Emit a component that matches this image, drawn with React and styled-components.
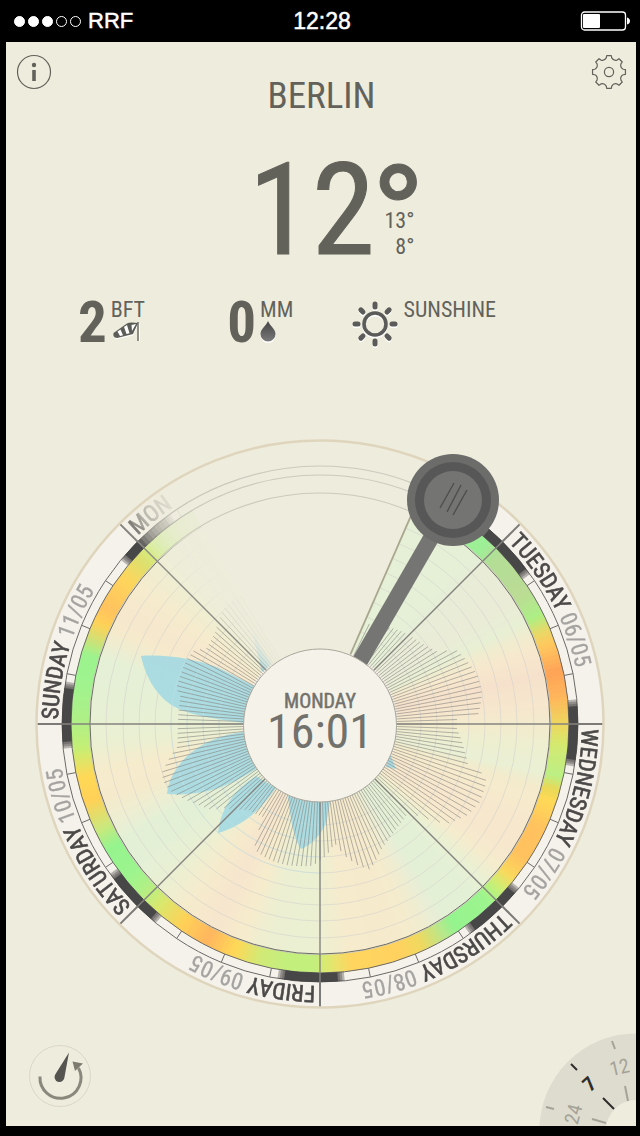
import React from 'react';
import styled, { createGlobalStyle } from 'styled-components';

const GlobalStyle = createGlobalStyle`
  * {
    box-sizing: border-box;
  }

  body {
    margin: 0;
    background: #000000;
    color: #62625b;
    font-family: 'Roboto Condensed', 'Liberation Sans Narrow', Roboto, sans-serif;
  }
`;

const Screen = styled.div`
  min-height: 100vh;
  display: flex;
  flex-direction: column;
  padding: 0 4px 10px 6px;
`;

const StatusBar = styled.header`
  height: 42px;
  display: grid;
  grid-template-columns: 1fr auto 1fr;
  align-items: center;
  padding: 0 6px 0 8px;
  color: #ffffff;
  font-family: 'Liberation Sans', sans-serif;
  font-size: 22px;
  line-height: 26px;
  -webkit-text-stroke: 0.5px #ffffff;
`;

const Carrier = styled.div`
  display: flex;
  align-items: center;
  gap: 3px;
`;

const SignalDot = styled.span`
  width: 11px;
  height: 11px;
  border: 1px solid #ffffff;
  border-radius: 50%;
  background: ${({ $on }) => ($on ? '#ffffff' : 'transparent')};
`;

const CarrierName = styled.span`
  margin-left: 4px;
`;

const Clock = styled.time`
  font-size: 23px;
`;

const BatterySlot = styled.div`
  display: flex;
  justify-content: flex-end;
`;

const Panel = styled.main`
  flex: 1;
  display: flex;
  flex-direction: column;
  background: #eeecdc;
  overflow: hidden;
`;

const TopBar = styled.div`
  display: flex;
  justify-content: space-between;
  align-items: flex-start;
  padding: 12px 9px 0 10px;
`;

const IconButton = styled.button`
  display: block;
  padding: 0;
  border: none;
  background: none;
  color: inherit;
  line-height: 0;
  cursor: pointer;
`;

const City = styled.h1`
  margin: 20px 0 0;
  font-size: 37px;
  font-weight: normal;
  line-height: 44px;
`;

const Temperature = styled.div`
  display: flex;
  justify-content: center;
  padding: 28px 0 0 28px;
`;

const Current = styled.div`
  font-size: 128px;
  line-height: 128px;
  -webkit-text-stroke: 1px #62625b;
`;

const Range = styled.div`
  display: flex;
  flex-direction: column;
  align-items: flex-end;
  font-size: 22px;
  line-height: 26px;
`;

const Extreme = styled.span`
  padding-right: 7px;
`;

const Degree = styled.span`
  height: 62px;
  font-family: 'Liberation Sans', sans-serif;
  font-size: 116px;
  font-weight: bold;
  line-height: 118px;
  -webkit-text-stroke: 1px #62625b;
`;

const Conditions = styled.div`
  display: grid;
  grid-template-columns: 149fr 124fr 284fr;
  align-items: start;
  padding: 20px 0 0 72px;
`;

const Condition = styled.div`
  display: flex;
  align-items: flex-start;
  gap: 4px;
`;

const Amount = styled.span`
  font-size: 57px;
  font-weight: bold;
  line-height: 57px;
`;

const Unit = styled.span`
  display: flex;
  flex-direction: column;
  padding-top: 5px;
  font-size: 22px;
  line-height: 22px;
`;

const Sky = styled.span`
  padding: 6px 1px 0;
  line-height: 0;
`;

const DialDrawing = styled.svg`
  display: block;
  width: 100%;
  height: auto;
  margin-top: auto;
  font-family: inherit;
`;

const Footer = styled.footer`
  display: flex;
  justify-content: space-between;
  align-items: flex-end;
  height: 106px;
  padding-left: 23px;
`;

const ResetButton = styled(IconButton)`
  margin-bottom: 19px;
`;

const CX = 320;
const CY = 724;

const point = (radius, angle) => {
  const a = (angle * Math.PI) / 180;
  return [CX + radius * Math.sin(a), CY - radius * Math.cos(a)];
};

const arc = (radius, from, to) => {
  const [x1, y1] = point(radius, from);
  const [x2, y2] = point(radius, to);
  const large = to - from > 180 ? 1 : 0;
  return `M${x1} ${y1}A${radius} ${radius} 0 ${large} 1 ${x2} ${y2}`;
};

const wedge = (radius, from, to) => {
  const [x, y] = point(radius, to);
  return `${arc(radius, from, to)}L${x} ${y}L${CX} ${CY}Z`;
};

// angle on the dial, colour of the temperature there
const TEMPERATURE = [
  [23, '#98f592'], [42, '#98f092'], [46, '#b0dd92'], [57, '#b8dc90'],
  [63, '#a8f080'], [67, '#e8d860'], [70, '#ffc858'], [77, '#ffa050'],
  [83, '#ffb455'], [90, '#ecd858'], [94, '#d4e868'], [102, '#b8f080'],
  [105, '#e8d850'], [108, '#ffd850'], [115, '#ffc058'], [123, '#ffc058'],
  [128, '#fad855'], [132, '#c8f070'], [136, '#98f58a'], [146, '#90f58a'],
  [149, '#b4e888'], [155, '#f0d858'], [160, '#ffd058'], [172, '#ffd458'],
  [177, '#e0e868'], [181, '#c0f078'], [188, '#c0f078'], [194, '#d0ea70'],
  [200, '#ffd850'], [207, '#ffb458'], [214, '#ffd050'], [221, '#d8e868'],
  [226, '#b0f080'], [231, '#98f58a'], [239, '#90f58a'], [244, '#c8e878'],
  [251, '#ffd050'], [257, '#ffd850'], [264, '#c0f070'], [270, '#acf082'],
  [281, '#98f58a'], [286, '#98f58a'], [290, '#d0e070'], [294, '#ffd050'],
  [298, '#ffc058'], [306, '#ffd455'], [312, '#dce068'], [316, '#d0ee80'],
  [320, '#c0f080'], [335, '#c0f080'],
];

// angle on the dial, how far out the wind line reaches
const WIND = [
  [24, 110], [42, 124], [52, 130], [58, 137], [62, 156], [67, 160], [73, 165],
  [79, 165], [84, 161], [87, 158], [88, 137], [92, 137], [98, 144], [105, 153],
  [107, 170], [109, 176], [116, 178], [122, 173], [125, 167], [128, 162],
  [130, 152], [132, 140], [135, 124], [137, 126], [143, 129], [147, 132],
  [153, 138], [160, 152], [161, 154], [165, 146], [169, 135], [173, 120],
  [177, 131], [183, 142], [193, 145], [200, 145], [206, 143], [209, 136],
  [211, 109], [220, 112], [229, 128], [232, 139], [237, 147], [240, 153],
  [246, 164], [250, 167], [253, 165], [257, 155], [261, 144], [269, 142],
  [281, 142], [284, 148], [296, 148], [300, 146], [304, 136], [311, 139],
  [320, 150], [330, 152],
];

const DAYS = [
  { name: 'TUESDAY', date: '06/05', angle: 45 },
  { name: 'WEDNESDAY', date: '07/05', angle: 90 },
  { name: 'THURSDAY', date: '08/05', angle: 135 },
  { name: 'FRIDAY', date: '09/05', angle: 180 },
  { name: 'SATURDAY', date: '10/05', angle: 225 },
  { name: 'SUNDAY', date: '11/05', angle: 270 },
  { name: 'MON', date: '', angle: 315 },
];

const RAIN = [
  'M141 656C165 654 200 659 223 670L256 687L244 723C225 720 195 717 177 708C160 700 146 680 141 656Z',
  'M167 794C170 764 200 737 243 732L256 769C235 782 210 797 167 794Z',
  'M218 833C221 806 235 790 256 776L276 788C262 808 245 825 218 833Z',
  'M288 796C290 815 293 838 301 849C312 845 324 832 327 819L331 796Z',
  'M390 754L396 769L386 767Z',
  'M252 630Q262 650 272 664L262 672Z',
];

const between = (stops, angle) => {
  const i = Math.max(1, stops.findIndex(([a]) => a >= angle));
  const [a1, v1] = stops[i - 1];
  const [a2, v2] = stops[i];
  return [v1, v2, (angle - a1) / (a2 - a1)];
};

const mixColor = (angle) => {
  const [c1, c2, t] = between(TEMPERATURE, angle);
  const channels = [1, 3, 5].map((at) => {
    const from = parseInt(c1.slice(at, at + 2), 16);
    const to = parseInt(c2.slice(at, at + 2), 16);
    return Math.round(from + (to - from) * t);
  });
  return `rgb(${channels.join(',')})`;
};

const reach = (angle) => {
  const [r1, r2, t] = between(WIND, angle);
  return r1 + (r2 - r1) * t;
};

const START = 23.6;
const degrees = Array.from({ length: 310 }, (_, i) => START + i);
const hours = Array.from({ length: 162 }, (_, i) => 26.25 + i * 1.875);
const fade = Array.from({ length: 13 }, (_, i) => 315 + i);
const rings = [101, 117, 133, 149, 165, 181, 197, 214];

const Spectrum = ({ radius, width, opacity }) => (
  <g fill="none" strokeWidth={width} opacity={opacity}>
    {degrees.map((a) => (
      <path key={a} d={arc(radius, a, a + 1.4)} stroke={mixColor(a)} />
    ))}
  </g>
);

const Night = ({ angle }) => (
  <g fill="none" stroke="#444242" strokeWidth="9">
    {[0, 0.5, 1, 1.5].map((inset) => (
      <path
        key={inset}
        d={arc(253.5, angle - 5.5 + inset, angle + 9.5 - inset)}
        opacity={inset === 1.5 ? 0.9 : 0.35}
      />
    ))}
  </g>
);

const DayLabel = ({ name, date, angle }) => (
  <>
    <path id={`day-${angle}`} d={arc(262, angle + 1, angle + 44)} fill="none" />
    <text fontSize="23" fill="#4b4948">
      <textPath href={`#day-${angle}`}>
        <tspan stroke="#4b4948" strokeWidth="0.6">{name}</tspan>
        <tspan fill="#a5a3a0" stroke="#a5a3a0" strokeWidth="0.3">{` ${date}`}</tspan>
      </textPath>
    </text>
  </>
);

const Spoke = ({ angle, from, to, ...rest }) => {
  const [x1, y1] = point(from, angle);
  const [x2, y2] = point(to, angle);
  return <line x1={x1} y1={y1} x2={x2} y2={y2} {...rest} />;
};

const Dial = () => (
  <DialDrawing viewBox="6 430 630 590" role="img" aria-label="Seven day weather dial">
    <defs>
      <mask id="fade" maskUnits="userSpaceOnUse" x="6" y="430" width="630" height="590">
        <rect x="6" y="430" width="630" height="590" fill="#ffffff" />
        {fade.map((a) => (
          <path key={a} d={wedge(300, a, 360 + START)} fill="#000000" opacity="0.18" />
        ))}
        <path d={wedge(300, 329, 360 + START)} fill="#000000" />
      </mask>
    </defs>

    <g fill="none" stroke="#cbcabc" strokeWidth="1.2">
      <circle cx={CX} cy={CY} r="258" />
      <circle cx={CX} cy={CY} r="249" />
      <circle cx={CX} cy={CY} r="231" />
    </g>

    <g mask="url(#fade)">
      <circle cx={CX} cy={CY} r="266" fill="none" stroke="#f5f2ec" strokeWidth="34" />
      <circle cx={CX} cy={CY} r="230" fill="#f5f0e6" />
      <Spectrum radius={154} width={152} opacity={0.17} />
      <Spectrum radius={240} width={18} opacity={0.95} />

      <g fill="none" stroke="#d3d2cc" strokeWidth="1" opacity="0.6">
        {rings.map((r) => <circle key={r} cx={CX} cy={CY} r={r} />)}
      </g>

      {RAIN.map((d) => <path key={d} d={d} fill="#a6dae2" opacity="0.95" />)}
      <g fill="none" stroke="#c3e3e6" strokeWidth="1" opacity="0.5">
        {rings.slice(0, 4).map((r) => <path key={r} d={arc(r, 180, 295)} />)}
      </g>

      {hours.map((a) => (
        <Spoke key={a} angle={a} from={76} to={reach(a)} stroke="#87847f" strokeWidth="1" opacity="0.6" />
      ))}

      <g fill="none" stroke="#6c6a67" strokeWidth="1">
        <circle cx={CX} cy={CY} r="258" />
        <circle cx={CX} cy={CY} r="249" />
        <circle cx={CX} cy={CY} r="230" />
      </g>

      {DAYS.map(({ angle }) => (
        <g key={angle} stroke="#6c6a67">
          <Night angle={angle} />
          {[11.25, 22.5, 33.75].map((step) => (
            <Spoke key={step} angle={angle + step} from={249} to={258} />
          ))}
          <Spoke angle={angle} from={76} to={258} stroke="#85837e" strokeWidth="1.4" />
          <Spoke angle={angle} from={258} to={283} stroke="#7c7a76" strokeWidth="2" />
        </g>
      ))}

      {DAYS.map((day) => <DayLabel key={day.angle} {...day} />)}
    </g>

    <circle cx={CX} cy={CY} r="283.5" fill="none" stroke="#dfd5bd" strokeWidth="2.5" />
    <Spoke angle={START} from={76} to={240} stroke="#aaa78f" strokeWidth="1.8" />

    <line x1="453" y1="500" x2="356" y2="668" stroke="#757573" strokeWidth="16" />
    <circle cx="453" cy="500" r="46" fill="#6c6c6a" />
    <circle cx="453" cy="500" r="38" fill="#575757" />
    <circle cx="453" cy="500" r="29" fill="#747472" />
    <path d="M454 483L440 508M461 485L447 512M467 490L453 515" stroke="#4e4e4e" strokeWidth="1.4" />

    <circle cx="320" cy="725.5" r="76.5" fill="#f5f2ea" stroke="#aaa79c" strokeWidth="1" />
    <g fill="#72716b" textAnchor="middle">
      <text x="320" y="708" fontSize="20" stroke="#72716b" strokeWidth="0.5">MONDAY</text>
      <text x="320" y="748" fontSize="48">16:01</text>
    </g>
  </DialDrawing>
);

const InfoIcon = () => (
  <svg width="36" height="36" viewBox="0 0 36 36" fill="none">
    <circle cx="18" cy="18" r="16.5" stroke="#62625b" strokeWidth="1.2" />
    <circle cx="18" cy="11" r="2.2" fill="#62625b" />
    <path d="M18 16v11" stroke="#62625b" strokeWidth="3.6" />
  </svg>
);

const gearPoint = (angle, r) => {
  const a = (angle * Math.PI) / 180;
  return `${(18 + r * Math.sin(a)).toFixed(2)} ${(18 - r * Math.cos(a)).toFixed(2)}`;
};

const gearOutline = () => {
  let d = `M${gearPoint(-8, 16.6)}`;
  for (let a = 0; a < 360; a += 45) {
    d += `L${gearPoint(a + 8, 16.6)}L${gearPoint(a + 11, 14.4)}`;
    d += `Q${gearPoint(a + 22.5, 11.8)} ${gearPoint(a + 34, 14.4)}L${gearPoint(a + 37, 16.6)}`;
  }
  return `${d}Z`;
};

const GearIcon = () => (
  <svg width="36" height="36" viewBox="0 0 36 36" fill="none" stroke="#62625b" strokeWidth="1.2" strokeLinejoin="round">
    <path d={gearOutline()} />
    <circle cx="18" cy="18" r="4.6" />
  </svg>
);

const BatteryIcon = () => (
  <svg width="50" height="20" viewBox="0 0 50 20" fill="none">
    <rect x="1.5" y="1" width="44" height="18" rx="3" stroke="#ffffff" strokeWidth="1.3" />
    <rect x="3" y="3" width="17" height="14" rx="1" fill="#ffffff" />
    <path d="M47 6.5q3 1 3 3.5t-3 3.5z" fill="#ffffff" />
  </svg>
);

const WindsockIcon = () => (
  <svg width="30" height="24" viewBox="0 0 30 24" fill="none">
    <path d="M4 18L22 14L27 3M28.500 3v17" stroke="#ffffff" strokeWidth="1" />
    <path d="M2.500 12L16 2.500Q18 1 27 2L22 13L6 17Q1.500 16.500 2.500 12Z" fill="#5c5c58" />
    <path d="M6.500 10.500L9 15L12 14.300L9.500 8.500ZM13 6L15.500 13L18.500 12.300L16 4ZM20.500 4L21 10L25 3Z" fill="#ffffff" />
    <path d="M27 1v19" stroke="#5c5c58" strokeWidth="1.3" />
  </svg>
);

const DropIcon = () => (
  <svg width="18" height="24" viewBox="0 0 18 24">
    <defs>
      <linearGradient id="drop" x1="0" y1="0" x2="0" y2="1">
        <stop offset="0" stopColor="#444444" />
        <stop offset="1" stopColor="#7a7a7a" />
      </linearGradient>
    </defs>
    <path d="M8 1C10 6 15.500 9 15.500 14.500A7.500 7.500 0 0 1 0.500 14.500C0.500 9 6 6 8 1Z" fill="#ffffff" />
    <path d="M8 0C10 5 15.500 8 15.500 13A7.500 7.500 0 0 1 0.500 13C0.500 8 6 5 8 0Z" fill="url(#drop)" />
  </svg>
);

const rays = [0, 45, 90, 135, 180, 225, 270, 315];

const SunIcon = () => (
  <svg width="46" height="50" viewBox="1 0 46 50" fill="none">
    {[['#ffffff', 1.5], ['#5b5b59', 0]].map(([color, shift]) => (
      <g key={color} stroke={color} transform={`translate(0 ${shift})`}>
        <circle cx="24" cy="24" r="11" strokeWidth="3.6" />
        {rays.map((a) => (
          <path key={a} d="M24 4v3" strokeWidth="5" strokeLinecap="round" transform={`rotate(${a} 24 24)`} />
        ))}
      </g>
    ))}
  </svg>
);

const ResetIcon = () => (
  <svg width="62" height="62" viewBox="0 0 62 62" fill="none">
    <circle cx="31" cy="31" r="30.5" stroke="#d9d7c8" />
    <path d="M11 31.500A20.500 20.500 0 1 0 49.500 23" stroke="#8a887c" strokeWidth="3" />
    <path d="M43.500 16.500L54 18.500L46 26Z" fill="#7d7b70" />
    <path d="M40 7.500L35.500 32A5 5 0 1 1 26.500 29Z" fill="#55544f" />
  </svg>
);

const HourWheel = () => (
  <svg width="97" height="93" viewBox="539 1033 97 93" fontSize="20" textAnchor="middle" role="img" aria-label="Forecast range">
    <circle cx="636" cy="1130" r="96.500" fill="#dedccf" />
    <circle cx="636" cy="1130" r="30" fill="#eeecdc" />
    <path d="M612 1041l3 8M546 1107l8 2M625 1086l3 15M592 1119l14 4" stroke="#a5a398" strokeWidth="2" />
    <path d="M571 1064l6 6M603 1098l11 11" stroke="#2e2d2b" strokeWidth="2" />
    <g fill="#a5a398">
      <text transform="translate(621 1074) rotate(-13)">12</text>
      <text transform="translate(580 1116) rotate(-75)">24</text>
    </g>
    <text transform="translate(594 1089) rotate(-42)" fill="#2e2d2b" fontWeight="bold">7</text>
  </svg>
);

const App = () => (
  <>
    <GlobalStyle />
    <Screen>
      <StatusBar>
        <Carrier>
          {[true, true, true, false, false].map((on, i) => <SignalDot key={i} $on={on} />)}
          <CarrierName>RRF</CarrierName>
        </Carrier>
        <Clock>12:28</Clock>
        <BatterySlot>
          <BatteryIcon />
        </BatterySlot>
      </StatusBar>
      <Panel>
        <TopBar>
          <IconButton type="button" aria-label="Info"><InfoIcon /></IconButton>
          <City>BERLIN</City>
          <IconButton type="button" aria-label="Settings"><GearIcon /></IconButton>
        </TopBar>
        <Temperature>
          <Current>12</Current>
          <Range>
            <Degree>°</Degree>
            <Extreme>13°</Extreme>
            <Extreme>8°</Extreme>
          </Range>
        </Temperature>
        <Conditions>
          <Condition>
            <Amount>2</Amount>
            <Unit>BFT<WindsockIcon /></Unit>
          </Condition>
          <Condition>
            <Amount>0</Amount>
            <Unit>MM<DropIcon /></Unit>
          </Condition>
          <Condition>
            <Sky><SunIcon /></Sky>
            <Unit>SUNSHINE</Unit>
          </Condition>
        </Conditions>
        <Dial />
        <Footer>
          <ResetButton type="button" aria-label="Back to now"><ResetIcon /></ResetButton>
          <HourWheel />
        </Footer>
      </Panel>
    </Screen>
  </>
);

export default App;
